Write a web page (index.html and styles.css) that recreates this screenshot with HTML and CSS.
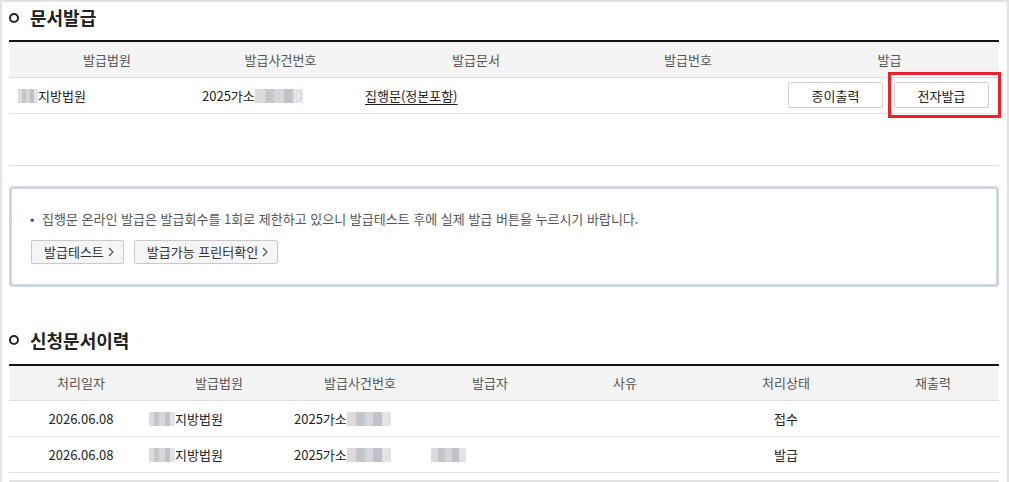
FILE: index.html
```html
<!DOCTYPE html>
<html lang="ko">
<head>
<meta charset="utf-8">
<link rel="stylesheet" href="styles.css">
</head>
<body>
<div class="frame">
  <h2 class="title"><span class="ring"></span>문서발급</h2>
  <table class="tbl issue">
    <colgroup><col class="w1"><col class="w2"><col class="w3"><col class="w4"><col class="w5"></colgroup>
    <thead>
      <tr><th class="sh">발급법원</th><th class="sh">발급사건번호</th><th>발급문서</th><th>발급번호</th><th>발급</th></tr>
    </thead>
    <tbody>
      <tr>
        <td class="l"><span class="blur b20"></span>지방법원</td>
        <td class="l">2025가소<span class="blur b48"></span></td>
        <td class="l doc"><a class="doclink">집행문(정본포함)</a></td>
        <td></td>
        <td class="btns"><div class="btnrow"><span class="btn">종이출력</span><span class="btn hl">전자발급</span></div></td>
      </tr>
    </tbody>
  </table>
  <div class="divider"></div>
  <div class="info">
    <p class="note">• <span>집행문 온라인 발급은 발급회수를 1회로 제한하고 있으니 발급테스트 후에 실제 발급 버튼을 누르시기 바랍니다.</span></p>
    <div class="ibtns">
      <span class="gbtn">발급테스트<svg class="chev" width="6" height="10" viewBox="0 0 6 10"><path d="M1 1l4 4-4 4" fill="none" stroke="#555" stroke-width="1.2"/></svg></span>
      <span class="gbtn">발급가능 프린터확인<svg class="chev" width="6" height="10" viewBox="0 0 6 10"><path d="M1 1l4 4-4 4" fill="none" stroke="#555" stroke-width="1.2"/></svg></span>
    </div>
  </div>
  <h2 class="title t2"><span class="ring"></span>신청문서이력</h2>
  <table class="tbl hist">
    <colgroup><col class="h1"><col class="h2"><col class="h3"><col class="h4"><col class="h5"><col class="h6"><col class="h7"></colgroup>
    <thead>
      <tr><th>처리일자</th><th>발급법원</th><th>발급사건번호</th><th>발급자</th><th>사유</th><th>처리상태</th><th>재출력</th></tr>
    </thead>
    <tbody>
      <tr>
        <td>2026.06.08</td>
        <td class="l p0"><span class="blur b25"></span>지방법원</td>
        <td class="l">2025가소<span class="blur b44"></span></td>
        <td></td><td></td>
        <td>접수</td><td></td>
      </tr>
      <tr>
        <td>2026.06.08</td>
        <td class="l p0"><span class="blur b25"></span>지방법원</td>
        <td class="l">2025가소<span class="blur b44"></span></td>
        <td class="l p0"><span class="blur b35"></span></td><td></td>
        <td>발급</td><td></td>
      </tr>
    </tbody>
  </table>
  <div class="bottomline"></div>
</div>
</body>
</html>
```
FILE: styles.css
```css
*, *::before, *::after { box-sizing: border-box; }
html, body { margin: 0; padding: 0; background: #fff; }
body {
  font-family: "Noto Sans CJK KR", "Noto Sans", sans-serif;
  font-size: 13px;
  color: #222;
}
.frame {
  width: 1009px;
  height: 482px;
  border: 2px solid #e2e2e2;
  border-bottom: none;
  padding: 2px 8px 0 7px;
  overflow: hidden;
}
.title {
  margin: 0 0 10px 0;
  height: 26px;
  line-height: 26px;
  font-size: 18px;
  font-weight: bold;
  color: #222;
  display: flex;
  align-items: center;
}
.title.t2 { margin-top: 40px; margin-bottom: 11px; }
.ring {
  flex: 0 0 auto;
  width: 10px;
  height: 10px;
  border: 2px solid #222;
  border-radius: 50%;
  margin-right: 11px;
  margin-top: 1px;
}
.tbl {
  width: 990px;
  border-collapse: collapse;
  table-layout: fixed;
  border-top: 2px solid #111;
}
.tbl th {
  height: 36px;
  background: #f4f4f4;
  color: #555;
  font-weight: normal;
  text-align: center;
  border-bottom: 1px solid #dcdcdc;
  padding: 0;
}
.tbl th.sh { padding-left: 12px; }
.tbl td {
  height: 36px;
  border-bottom: 1px solid #e2e2e2;
  text-align: center;
  padding: 0;
  white-space: nowrap;
}
.tbl td.l { text-align: left; padding-left: 9px; }
.tbl td.p0 { padding-left: 0; }
.p0 .blur { margin-left: -4px; }
.issue .w1 { width: 184px; }
.issue .w2 { width: 163px; }
.issue .w3 { width: 240px; }
.issue .w4 { width: 184px; }
.issue .w5 { width: 219px; }
.doclink { color: #222; text-decoration: underline; text-underline-offset: 3px; }
.blur {
  display: inline-block;
  height: 14px;
  vertical-align: -2px;
  background: linear-gradient(90deg, #dedadc 0 20%, #c4c6cc 20% 40%, #d6d6da 40% 60%, #bfc2c8 60% 80%, #e3e3e6 80% 100%);
}
.b20 { width: 20px; }
.b25 { width: 26px; }
.b35 { width: 35px; }
.b44 { width: 44px; }
.b48 { width: 48px; }
.tbl td.btns { padding-right: 10px; }
.btnrow { display: flex; justify-content: flex-end; gap: 11px; }
.btn {
  display: flex;
  align-items: center;
  justify-content: center;
  width: 95px;
  height: 26px;
  border: 1px solid #cfcfcf;
  border-radius: 2px;
  background: #fff;
  color: #222;
}
.btn.hl { position: relative; }
.btn.hl::after {
  content: "";
  position: absolute;
  left: -7px;
  top: -11px;
  width: 113px;
  height: 46px;
  border: 3px solid #e8212b;
}
.divider {
  margin-top: 51px;
  height: 1px;
  background: #dcdcdc;
}
.info {
  margin-top: 20px;
  height: 101px;
  border: 3px solid #cdd5e0;
  border-radius: 4px;
  padding: 20px 18px 0 18px;
}
.note {
  margin: 0;
  line-height: 20px;
  color: #555;
  font-size: 13px;
}
.note span { margin-left: 4px; }
.ibtns { margin-top: 11px; padding-left: 1px; display: flex; gap: 10px; }
.gbtn {
  display: inline-flex;
  align-items: center;
  height: 24px;
  padding: 0 9px 0 12px;
  background: #f5f5f5;
  border: 1px solid #c9c9c9;
  border-radius: 2px;
  color: #333;
  font-size: 13px;
}
.chev { margin-left: 4px; }
.hist .h1 { width: 144px; }
.hist .h2 { width: 132px; }
.hist .h3 { width: 150px; }
.hist .h4 { width: 110px; }
.hist .h5 { width: 160px; }
.hist .h6 { width: 162px; }
.hist .h7 { width: 132px; }
.bottomline {
  margin-top: 7px;
  height: 2px;
  background: #e2e2e2;
}
```
